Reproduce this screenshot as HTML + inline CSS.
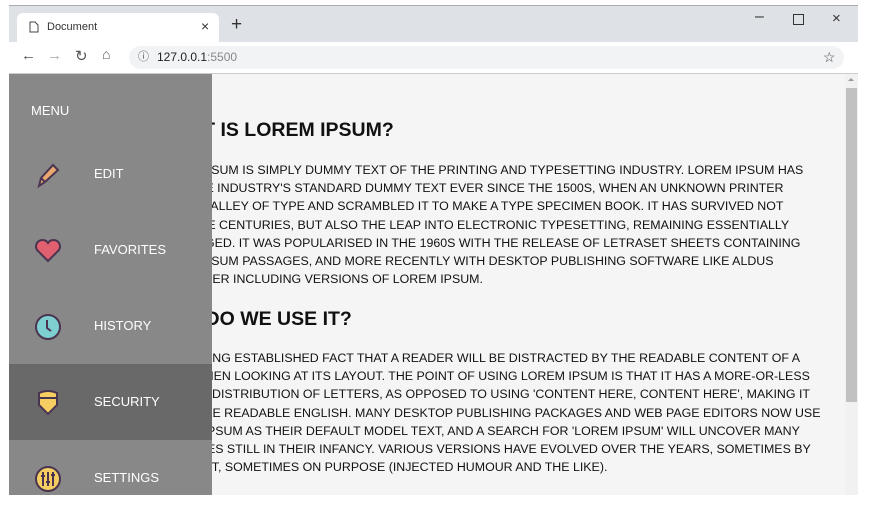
<!DOCTYPE html>
<html><head><style>
body{margin:0;width:879px;height:511px;background:#fff;position:relative;overflow:hidden;font-family:"Liberation Sans",sans-serif}
.win{position:absolute;left:9px;top:5px;width:849px;height:489px;background:#f5f5f5;overflow:hidden;border-top:1px solid #aaa}
.tabbar{position:absolute;left:0;top:0;width:849px;height:36px;background:#dee1e6}
.tab{position:absolute;left:8px;top:7px;width:202px;height:29px;background:#fff;border-radius:6px 6px 0 0;font-size:11px;color:#333}
.tool{position:absolute;left:0;top:36px;width:849px;height:31px;background:#fff;border-bottom:1px solid #ccc}
.url{position:absolute;left:120px;top:4px;width:715px;height:23px;background:#f1f3f4;border-radius:12px;font-size:12px;line-height:23px;color:#222}
.content{position:absolute;left:0;top:68px;width:836px;height:421px;background:#f5f5f5}
.txt{position:absolute;left:139px;top:0;white-space:nowrap;color:#111}
h1{position:absolute;margin:0;font-size:19.5px;font-weight:bold;left:0}
.p{position:absolute;left:0;font-size:12.4px;line-height:18.2px}
.side{position:absolute;left:0;top:68px;width:203px;height:421px;background:#888;color:#fff;font-size:13px;z-index:2}
.item{position:absolute;left:0;width:203px;height:76px}
.item span{position:absolute;left:85px;top:30px}
.item svg{position:absolute;left:24px;top:24px}
.sb{position:absolute;left:836px;top:68px;width:13px;height:421px;background:#f1f1f1}
</style></head><body>
<div class="win">
<div class="tabbar">
<div class="tab"><svg style="position:absolute;left:12px;top:8px" width="10" height="12"><path d="M1 1h5l3 3v7H1z" fill="none" stroke="#444"/></svg><span style="position:absolute;left:30px;top:8px">Document</span><span style="position:absolute;left:184px;top:5px;font-size:14px">×</span></div>
<span style="position:absolute;left:222px;top:8px;font-size:19px;color:#333">+</span>
<span style="position:absolute;left:746px;top:2px;font-size:16px;color:#333">–</span>
<div style="position:absolute;left:784px;top:8px;width:9px;height:9px;border:1px solid #333"></div>
<span style="position:absolute;left:823px;top:4px;font-size:15px;color:#333">×</span>
</div>
<div class="tool">
<span style="position:absolute;left:12px;top:5px;font-size:15px;color:#555">←</span>
<span style="position:absolute;left:38px;top:5px;font-size:15px;color:#aaa">→</span>
<span style="position:absolute;left:66px;top:5px;font-size:15px;color:#555">↻</span>
<span style="position:absolute;left:93px;top:4px;font-size:14px;color:#555">⌂</span>
<div class="url"><span style="position:absolute;left:9px;font-size:11px;color:#555">ⓘ</span><span style="position:absolute;left:28px">127.0.0.1<span style="color:#888">:5500</span></span><span style="position:absolute;left:694px;font-size:14px;color:#444">☆</span></div>
</div>
<div class="content"><div class="txt">
<h1 style="top:45px;left:10px">WHAT IS LOREM IPSUM?</h1>
<div class="p" style="top:87px;left:4px">LOREM IPSUM IS SIMPLY DUMMY TEXT OF THE PRINTING AND TYPESETTING INDUSTRY. LOREM IPSUM HAS<br>BEEN THE INDUSTRY'S STANDARD DUMMY TEXT EVER SINCE THE 1500S, WHEN AN UNKNOWN PRINTER<br>TOOK A GALLEY OF TYPE AND SCRAMBLED IT TO MAKE A TYPE SPECIMEN BOOK. IT HAS SURVIVED NOT<br>ONLY FIVE CENTURIES, BUT ALSO THE LEAP INTO ELECTRONIC TYPESETTING, REMAINING ESSENTIALLY<br>UNCHANGED. IT WAS POPULARISED IN THE 1960S WITH THE RELEASE OF LETRASET SHEETS CONTAINING<br>LOREM IPSUM PASSAGES, AND MORE RECENTLY WITH DESKTOP PUBLISHING SOFTWARE LIKE ALDUS<br>PAGEMAKER INCLUDING VERSIONS OF LOREM IPSUM.</div>
<h1 style="top:234px;left:7px">WHY DO WE USE IT?</h1>
<div class="p" style="top:275px;left:8px">IT IS A LONG ESTABLISHED FACT THAT A READER WILL BE DISTRACTED BY THE READABLE CONTENT OF A<br>PAGE WHEN LOOKING AT ITS LAYOUT. THE POINT OF USING LOREM IPSUM IS THAT IT HAS A MORE-OR-LESS<br>NORMAL DISTRIBUTION OF LETTERS, AS OPPOSED TO USING 'CONTENT HERE, CONTENT HERE', MAKING IT<br>LOOK LIKE READABLE ENGLISH. MANY DESKTOP PUBLISHING PACKAGES AND WEB PAGE EDITORS NOW USE<br>LOREM IPSUM AS THEIR DEFAULT MODEL TEXT, AND A SEARCH FOR 'LOREM IPSUM' WILL UNCOVER MANY<br>WEB SITES STILL IN THEIR INFANCY. VARIOUS VERSIONS HAVE EVOLVED OVER THE YEARS, SOMETIMES BY<br>ACCIDENT, SOMETIMES ON PURPOSE (INJECTED HUMOUR AND THE LIKE).</div>
</div></div>
<div class="side">
<span style="position:absolute;left:22px;top:29px">MENU</span>
<div class="item" style="top:62px"><svg width="30" height="30"><path d="M6 26l2-8L20 5l5 5L12 22z" fill="#e8a870" stroke="#4a3550" stroke-width="2"/><path d="M8 18l4 4" stroke="#4a3550" stroke-width="2"/></svg><span>EDIT</span></div>
<div class="item" style="top:138px"><svg width="30" height="30"><path d="M15 25L4 14a6 6 0 0 1 11-7 6 6 0 0 1 11 7z" fill="#e06070" stroke="#4a3550" stroke-width="2"/></svg><span>FAVORITES</span></div>
<div class="item" style="top:214px"><svg width="30" height="30"><circle cx="15" cy="15" r="12" fill="#7ecfd0" stroke="#4a3550" stroke-width="2"/><path d="M14 8v8l4 3" fill="none" stroke="#4a3550" stroke-width="2"/></svg><span>HISTORY</span></div>
<div class="item" style="top:290px;background:#696969"><svg width="30" height="30"><path d="M6 5q9-4 18 0v12l-9 9-9-9z" fill="#f5cd60" stroke="#4a3550" stroke-width="2"/><path d="M6 10h18" stroke="#4a3550" stroke-width="2"/></svg><span>SECURITY</span></div>
<div class="item" style="top:366px"><svg width="30" height="30"><circle cx="15" cy="15" r="12" fill="#f5cd60" stroke="#4a3550" stroke-width="2"/><path d="M10 8v14M15 8v14M20 8v14M8 12h4M13 18h4M18 11h4" stroke="#4a3550" stroke-width="2"/></svg><span>SETTINGS</span></div>
</div>
<div class="sb"><div style="position:absolute;left:1px;top:14px;width:11px;height:314px;background:#c1c1c1"></div><div style="position:absolute;left:3px;top:4px;border:3px solid transparent;border-bottom-color:#999;border-top:0"></div></div>
</div>
</body></html>
